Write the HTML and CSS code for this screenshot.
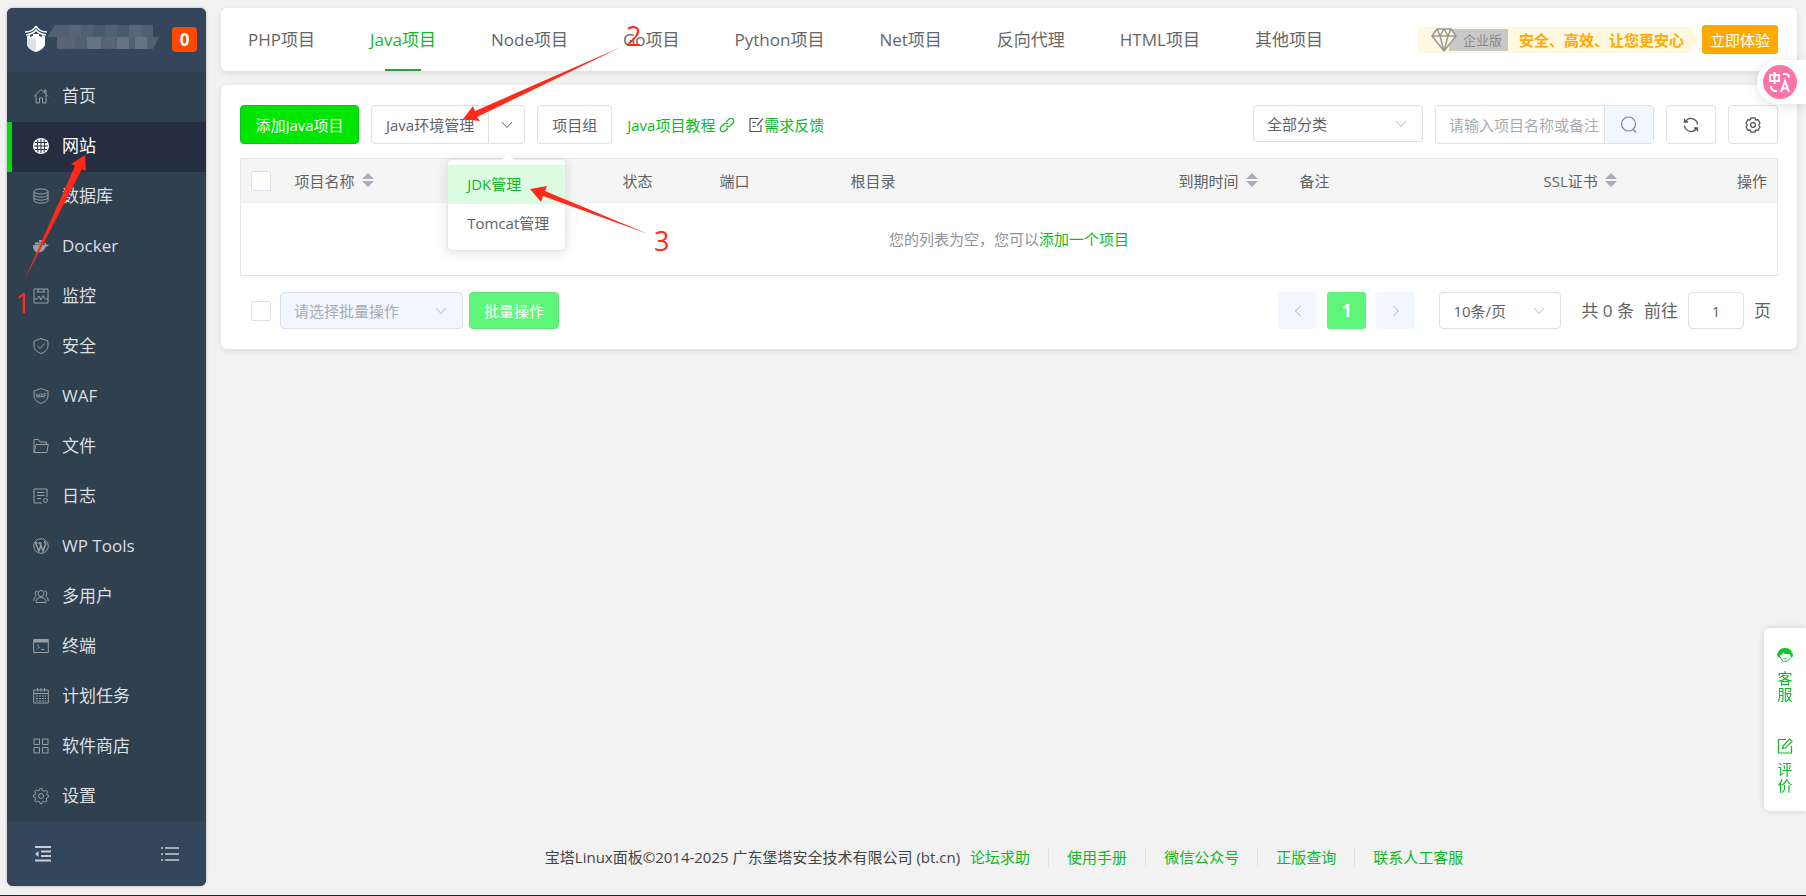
FILE: index.html
```html
<!DOCTYPE html>
<html lang="zh-CN">
<head>
  <meta charset="UTF-8">
  <meta name="viewport" content="width=device-width, initial-scale=1.0">
  <title>宝塔Linux面板</title>
  <link rel="stylesheet" href="styles.css">
</head>
<body>
  <aside class="sidebar">
    <div class="sidebar-head">
      <svg class="logo" viewBox="0 0 22 26" width="22" height="26">
        <path d="M0 6Q8 6 11 0Q14 6 22 6M1 9Q8 8 11 4Q14 8 21 9" fill="none" stroke="#fff" stroke-width="1.500"/>
        <path d="M2 10L5 9V11L8 10V8H14V10L17 11V9L20 10V19Q18 24 11 26Q4 24 2 19Z" fill="#fff"/>
        <path d="M11 12V26Q4 24 2 19V12Z" fill="#dfe3e8"/>
      </svg>
      <svg class="host" viewBox="0 0 112 24" width="112" height="24">
        <path d="M0 12L8 0H106V12H112L106 24H10V12Z" fill="#526074"/>
        <path d="M22 0h12v12h-12zM82 0h12v12h-12zM10 12h18v12h-18zM56 12h12v12h-12z" fill="#59647a"/>
        <path d="M40 12h14v12h-14zM70 12h12v12h-12zM88 12h12v12h-12z" fill="#667385"/>
        <path d="M46 0h12v12h-12zM70 0h12v12h-12z" fill="#475a6f"/>
      </svg>
      <a class="msg-count" href="#">0</a>
    </div>
    <nav class="menu">
      <a href="#"><svg viewBox="0 0 16 16"><path d="M1 8.500L8 1.500L15 8.500M3 7V15H6.500V10H9.500V15H13V7M11.500 4.500V2H13V6"/></svg>首页</a>
      <a href="#" class="active"><svg viewBox="0 0 16 16"><circle cx="8" cy="8" r="8" fill="#fff" stroke="none"/><path class="globe" d="M8 1V15M1 8H15M2 4.500H14M2 11.500H14M5 1.500Q3.500 8 5 14.500M11 1.500Q12.500 8 11 14.500"/></svg>网站</a>
      <a href="#"><svg viewBox="0 0 16 16"><ellipse cx="8" cy="3.500" rx="7" ry="2.500"/><path d="M1 3.500V12.500C1 16 15 16 15 12.500V3.500M1 6.500C1 10 15 10 15 6.500M1 9.500C1 13 15 13 15 9.500"/></svg>数据库</a>
      <a href="#"><svg viewBox="0 0 16 16"><path class="solid" d="M0 7H11.500Q11 5.500 12 4.500Q13.300 5.500 13.300 6.600Q15 6.200 16 7Q15 8.800 12.800 8.800Q11 14.500 5.500 14.500Q0 14.500 0 7ZM2 4.500H10V6.500H2ZM6 2H10V4H6Z"/></svg>Docker</a>
      <a href="#"><svg viewBox="0 0 16 16"><path d="M1 1H15V15H1ZM4 4H12M1 11H4L6 8L8 12L10 7.500L12 11H15M5 1V4M11 1V4"/></svg>监控</a>
      <a href="#"><svg viewBox="0 0 16 16"><path d="M8 .5L15 3V8Q15 13 8 15.500Q1 13 1 8V3ZM4.500 8L7.200 10.500L11.500 5.500"/></svg>安全</a>
      <a href="#"><svg viewBox="0 0 16 16"><path d="M8 .5L15 3V8Q15 13 8 15.500Q1 13 1 8V3Z"/><path class="thin" d="M3 5.500L4 9.500L5 6.500L6 9.500L7 5.500M7.500 9.500L8.700 5.500L10 9.500M8 8.500H9.500M11 9.500V5.500H13.300M11 7.500H13"/></svg>WAF</a>
      <a href="#"><svg viewBox="0 0 16 16"><path d="M1 14.500V1.500H5.500L7 4H13.500V6.500M1 14.500L3 6.500H15.300L13.800 14.500Z"/></svg>文件</a>
      <a href="#"><svg viewBox="0 0 16 16"><path d="M9 15H1V1H14V9M4 4.500H11.500M4 7.500H11.500M4 10.500H8"/><circle cx="12.500" cy="12.500" r="2"/></svg>日志</a>
      <a href="#"><svg viewBox="0 0 16 16"><circle cx="8" cy="8" r="7.300"/><path class="bold" d="M2.500 5L5.800 13L8.300 6.500M6.500 4.500L10 13L12.800 6Q12 4 11 3.500M1.800 5H4.500M5.500 5H8.500"/></svg>WP Tools</a>
      <a href="#"><svg viewBox="0 0 16 16"><circle cx="8" cy="5.500" r="3"/><path d="M3 14.500Q3 9.500 8 9.500T13 14.500ZM4.500 3Q2 3 2.200 5.500Q2.400 7.500 3.500 8Q.5 9.500 .7 13M11.500 3Q14 3 13.800 5.500Q13.600 7.500 12.500 8Q15.500 9.500 15.300 13"/></svg>多用户</a>
      <a href="#"><svg viewBox="0 0 16 16"><path d="M.7 1.500H15.300V14.500H.7ZM4 7L6.500 9L4 11.500M8 11.500H11.500"/><path class="solid" d="M1 1.500H15V4.500H1Z"/></svg>终端</a>
      <a href="#"><svg viewBox="0 0 16 16"><path d="M.7 2H15.300V15H.7ZM.7 5.500H15.300M4.500 0V3.500M8 0V3.500M11.500 0V3.500"/><path d="M3 8H13M3 10.500H13M3 13H13" stroke-dasharray="2 1"/></svg>计划任务</a>
      <a href="#"><svg viewBox="0 0 16 16"><path d="M1 1H6.500V6.500H1ZM9.500 1H15V6.500H9.500ZM1 9.500H6.500V15H1ZM9.500 9.500H15V15H9.500Z"/></svg>软件商店</a>
      <a href="#"><svg viewBox="0 0 16 16"><path d="M6.800 .7H9.200L9.700 2.700L11.300 3.300L13.100 2.300L14.700 4L13.600 5.700L14.200 7.200L15.500 7.500V9L14 9.600L13.300 11L14 13L12.500 14.200L10.800 13.300L9.500 13.800L9 15.400H7L6.500 13.800L5 13.200L3.200 14.200L1.800 12.600L2.700 10.900L2.100 9.500L.5 9V7L2.200 6.500L2.800 5L1.900 3.300L3.500 1.900L5 2.800L6.300 2.400Z"/><circle cx="8" cy="8" r="2.500"/></svg>设置</a>
    </nav>
    <div class="sidebar-foot">
      <button type="button" aria-label="收起菜单"><svg viewBox="0 0 18 18" width="18" height="18"><path d="M1 2H17M7 6.500H17M7 11H17M1 15.500H17" stroke="#c8ced6" stroke-width="1.800"/><path d="M1 9L4.500 6V12Z" fill="#c8ced6"/></svg></button>
      <button type="button" aria-label="菜单设置"><svg viewBox="0 0 18 18" width="18" height="18"><path d="M4 3H18M4 9H18M4 15H18M0 3H2M0 9H2M0 15H2" stroke="#c8ced6" stroke-width="1.600"/></svg></button>
    </div>
  </aside>

  <main class="main">
    <header class="card topbar">
      <nav class="tabs">
        <a href="#">PHP项目</a>
        <a href="#" class="active">Java项目</a>
        <a href="#">Node项目</a>
        <a href="#">Go项目</a>
        <a href="#">Python项目</a>
        <a href="#">Net项目</a>
        <a href="#">反向代理</a>
        <a href="#">HTML项目</a>
        <a href="#">其他项目</a>
      </nav>
      <div class="promo">
        <div class="promo-bar">
          <svg class="diamond" viewBox="0 0 26 24" width="26" height="24"><path d="M6 1H20L25 8L13 23L1 8ZM1 8H25M6 1L9 8L13 23L17 8L20 1M9 8L13 1L17 8" fill="#fff8e0" stroke="#999" stroke-width="1.500" stroke-linejoin="round"/></svg>
          <span class="edition">企业版</span>
          <strong>安全、高效、让您更安心</strong>
        </div>
        <button type="button" class="try">立即体验</button>
      </div>
    </header>

    <section class="card content">
      <div class="toolbar">
        <button type="button" class="btn primary">添加Java项目</button>
        <div class="split">
          <button type="button" class="btn">Java环境管理</button>
          <button type="button" class="btn caret" aria-label="展开"><svg viewBox="0 0 12 8" width="12" height="8"><path d="M1 1L6 6.500L11 1" fill="none" stroke="#606266"/></svg></button>
          <div class="dropdown">
            <a href="#" class="active">JDK管理</a>
            <a href="#">Tomcat管理</a>
          </div>
        </div>
        <button type="button" class="btn">项目组</button>
        <div class="links">
          <a href="#">Java项目教程 <svg viewBox="0 0 16 16" width="16" height="16"><path d="M7 5L10 2Q12 .5 14 2Q15.500 4 14 6L11 9Q9 10.500 7 9M9 11L6 14Q4 15.500 2 14Q.5 12 2 10L5 7Q7 5.500 9 7" fill="none" stroke="#10b824" stroke-width="1.200"/></svg></a>
          <a href="#"><svg viewBox="0 0 16 16" width="16" height="16"><path d="M11 1.500H2V14.500H13V8M4.500 5.500H8M4.500 9.500H7.500M9 8.500L15 1.500" fill="none" stroke="#555" stroke-width="1.200"/></svg>需求反馈</a>
        </div>
        <div class="tools">
          <div class="select category">
            <select aria-label="分类"><option>全部分类</option></select>
            <svg viewBox="0 0 12 8" width="12" height="8"><path d="M1 1L6 6.500L11 1" fill="none" stroke="#b4b8c0"/></svg>
          </div>
          <div class="search">
            <input type="text" aria-label="搜索" placeholder="请输入项目名称或备注">
            <button type="button" aria-label="搜索"><svg viewBox="0 0 18 18" width="18" height="18"><circle cx="8.500" cy="8" r="7" fill="none" stroke="#7d828b" stroke-width="1.200"/><path d="M13 13.500L16 16.500" stroke="#7d828b" stroke-width="1.200"/></svg></button>
          </div>
          <button type="button" class="btn icon" aria-label="刷新"><svg viewBox="0 0 16 16" width="16" height="16"><path d="M1.500 1.500V5H5M2 5Q5 .8 9 1.600Q14 2.700 14.500 7.500M14.500 14.500V11H11M14 11Q11 15.200 7 14.400Q2 13.300 1.500 8.500" fill="none" stroke="#555" stroke-width="1.300"/></svg></button>
          <button type="button" class="btn icon" aria-label="设置"><svg viewBox="0 0 16 16" width="16" height="16"><path d="M6 .8H10L10.700 3L13 2.700L15 6L13.600 8L15 10L13 13.300L10.700 13L10 15.200H6L5.300 13L3 13.300L1 10L2.400 8L1 6L3 2.700L5.300 3Z" fill="none" stroke="#555" stroke-width="1.300" stroke-linejoin="round"/><circle cx="8" cy="8" r="2.400" fill="none" stroke="#555" stroke-width="1.300"/></svg></button>
        </div>
      </div>

      <table class="list">
        <colgroup>
          <col class="c-check"><col class="c-name"><col class="c-state"><col class="c-port"><col><col class="c-date"><col class="c-note"><col class="c-ssl"><col class="c-action">
        </colgroup>
        <thead>
          <tr>
            <th><input type="checkbox" aria-label="全选"></th>
            <th>项目名称<svg class="sort" viewBox="0 0 12 14"><path d="M6 0L12 6H0ZM0 8H12L6 14Z"/></svg></th>
            <th>状态</th>
            <th>端口</th>
            <th>根目录</th>
            <th>到期时间<svg class="sort" viewBox="0 0 12 14"><path d="M6 0L12 6H0ZM0 8H12L6 14Z"/></svg></th>
            <th>备注</th>
            <th>SSL证书<svg class="sort" viewBox="0 0 12 14"><path d="M6 0L12 6H0ZM0 8H12L6 14Z"/></svg></th>
            <th class="right">操作</th>
          </tr>
        </thead>
        <tbody>
          <tr><td colspan="9">您的列表为空，您可以<a href="#">添加一个项目</a></td></tr>
        </tbody>
      </table>

      <div class="table-foot">
        <input type="checkbox" aria-label="选择全部">
        <div class="select batch">
          <select aria-label="批量操作" disabled><option>请选择批量操作</option></select>
          <svg viewBox="0 0 12 8" width="12" height="8"><path d="M1 1L6 6.500L11 1" fill="none" stroke="#b4b8c0"/></svg>
        </div>
        <button type="button" class="btn run" disabled>批量操作</button>
        <div class="pager">
          <button type="button" aria-label="上一页"><svg viewBox="0 0 8 12" width="8" height="12"><path d="M6.500 1L1.500 6L6.500 11" fill="none" stroke="#a8abb2"/></svg></button>
          <button type="button" class="current">1</button>
          <button type="button" aria-label="下一页"><svg viewBox="0 0 8 12" width="8" height="12"><path d="M1.500 1L6.500 6L1.500 11" fill="none" stroke="#a8abb2"/></svg></button>
          <div class="select size">
            <select aria-label="每页条数"><option>10条/页</option></select>
            <svg viewBox="0 0 12 8" width="12" height="8"><path d="M1 1L6 6.500L11 1" fill="none" stroke="#b4b8c0"/></svg>
          </div>
          <span class="total">共 0 条</span>
          <label for="page">前往</label>
          <input type="text" id="page" value="1">
          <span>页</span>
        </div>
      </div>
    </section>

    <footer class="footer">
      <span>宝塔Linux面板©2014-2025 广东堡塔安全技术有限公司 (bt.cn)</span>
      <a href="#">论坛求助</a>
      <a href="#">使用手册</a>
      <a href="#">微信公众号</a>
      <a href="#">正版查询</a>
      <a href="#">联系人工客服</a>
    </footer>
  </main>

  <button type="button" class="translate" aria-label="翻译">
    <svg viewBox="0 0 34 34" width="34" height="34">
      <circle cx="17" cy="17" r="17" fill="#ff74a6"/>
      <path d="M7 10H16V16H7ZM11.500 7V19M20 9H22Q26 9 26 13M8 21Q8 26 13 26H14M18 27L22 16L26 27M19.500 23.500H24.500" fill="none" stroke="#fff" stroke-width="2"/>
    </svg>
  </button>

  <div class="side-help">
    <a href="#">
      <svg viewBox="0 0 16 16" width="16" height="16"><path d="M1 6Q2 1 8 1T15 6Q16 6 16 8T14.500 11L12.500 7Q8 8 6 5.500Q5.500 7.500 3.500 8L2.500 11Q0 10 0 8T1 6Z" fill="#14c52c"/><path d="M3.500 10Q4.500 14.500 8 14.500Q11.500 14.500 13.500 11M6.500 11.500Q8 12.500 9.500 11.500" fill="none" stroke="#14c52c"/></svg>
      <span>客服</span>
    </a>
    <a href="#">
      <svg viewBox="0 0 16 16" width="16" height="16"><path d="M9 1.500H1.500V15H14.500V8M5.500 10.500L6.500 7.500L12.500 1L15 3.200L8.700 9.800Z" fill="none" stroke="#10b824" stroke-width="1.200"/></svg>
      <span>评价</span>
    </a>
  </div>

  <!-- step arrows over the page -->
  <svg class="steps" width="700" height="330" viewBox="0 0 700 330">
    <path d="M85 155L86 171L82 169L24 281L75 166L71 164Z"/>
    <path d="M463 119L473 106L475 111L621 47L477 117L480 121Z"/>
    <path d="M530 189L547 186L545 191L648 234L543 196L541 202Z"/>
    <text x="15" y="313">1</text>
    <text x="626" y="46">2</text>
    <text x="654" y="251">3</text>
  </svg>
</body>
</html>
```
FILE: styles.css
```css
* {
  box-sizing: border-box;
}
body {
  margin: 0;
  min-height: 100vh;
  display: flex;
  gap: 15px;
  padding: 8px 9px 9px 7px;
  background: #f2f2f2;
  border-bottom: 1px solid #222;
  font-family: "Open Sans", "Noto Sans CJK SC", sans-serif;
  font-size: 15px;
  line-height: 20px;
  color: #606266;
}
a {
  color: #10b824;
  text-decoration: none;
}
button, input, select {
  font: inherit;
  color: inherit;
  margin: 0;
}
button {
  cursor: pointer;
}

/* sidebar */
.sidebar {
  width: 199px;
  flex: none;
  display: flex;
  flex-direction: column;
  background: #2f404e;
  border-radius: 6px;
  overflow: hidden;
  box-shadow: 0 0 3px rgba(0, 0, 0, 0.3);
}
.sidebar-head {
  height: 64px;
  display: flex;
  align-items: center;
  padding: 0 9px 2px 18px;
  background: #34465c;
}
.host {
  margin: -4px auto 0 0;
}
.msg-count {
  width: 25px;
  height: 25px;
  border-radius: 4px;
  background: #ff4800;
  color: #fff;
  font-size: 17px;
  font-weight: bold;
  line-height: 25px;
  text-align: center;
}
.menu {
  flex: 1;
}
.menu a {
  height: 50px;
  display: flex;
  align-items: center;
  gap: 13px;
  padding: 0 0 2px 21px;
  border-left: 5px solid transparent;
  color: #dcdfe2;
  font-size: 17px;
}
.menu a.active {
  background: #262d41;
  border-left-color: #00dc0a;
  color: #fff;
}
.menu svg {
  width: 16px;
  height: 16px;
  fill: none;
  stroke: #999fa5;
}
.menu .solid {
  fill: #999fa5;
  stroke: none;
}
.menu .globe {
  stroke: #262d41;
}
.menu .thin {
  stroke-width: 0.8;
}
.menu .bold {
  stroke-width: 1.5;
}
.sidebar-foot {
  height: 64px;
  display: flex;
  align-items: center;
  justify-content: space-between;
  padding: 0 27px;
  background: #34465c;
}
.sidebar-foot button {
  height: 18px;
  padding: 0;
  border: 0;
  background: none;
}

/* main */
.main {
  flex: 1;
  min-width: 0;
  display: flex;
  flex-direction: column;
}
.card {
  background: #fff;
  border-radius: 6px;
  box-shadow: 0 2px 6px rgba(0, 0, 0, 0.1);
}
.topbar {
  height: 63px;
  display: flex;
  align-items: center;
  justify-content: space-between;
  padding-right: 19px;
}
.tabs {
  display: flex;
  gap: 1px;
  height: 100%;
}
.tabs a {
  display: flex;
  flex-direction: column;
  align-items: center;
  padding: 0 27px;
  color: #666;
  font-size: 17px;
  line-height: 63px;
  white-space: nowrap;
}
.tabs a.active {
  color: #10b824;
}
.tabs a.active::after {
  content: "";
  width: 36px;
  height: 2px;
  margin-top: -2px;
  background: #20a53a;
}
.promo {
  display: flex;
  align-items: center;
  gap: 9px;
}
.promo-bar {
  height: 26px;
  width: 275px;
  display: flex;
  align-items: center;
  padding-left: 13px;
  border-radius: 4px;
  background: #fff8e0;
  white-space: nowrap;
}
.promo-bar strong {
  color: #ffa800;
}
.promo-bar::after {
  content: "";
  flex: none;
  margin-left: auto;
  margin-right: -7px;
  border: 7px solid transparent;
  border-right: 0;
  border-left-color: #fff8e0;
}
.diamond {
  flex: none;
  z-index: 1;
}
.edition {
  height: 22px;
  margin: 0 11px 0 -8px;
  padding: 0 6px 0 14px;
  background: #c8c8c8;
  color: #888;
  font-size: 13px;
  line-height: 22px;
}
.try {
  width: 76px;
  height: 29px;
  padding: 0;
  border: 0;
  border-radius: 3px;
  background: #ffa800;
  color: #fff;
}

/* project list */
.content {
  margin-top: 14px;
  padding: 20px 19px;
}
.toolbar {
  display: flex;
  align-items: center;
  height: 39px;
  gap: 12px;
}
.btn {
  height: 39px;
  padding: 0 14px;
  border: 1px solid #dcdfe6;
  border-radius: 4px;
  background: #fff;
  white-space: nowrap;
}
.btn svg {
  display: block;
  margin: 0 auto;
}
.btn.primary {
  min-width: 119px;
  border-color: #00c814;
  background: #00e600;
  color: #fff;
}
.split {
  position: relative;
  display: flex;
}
.split .btn {
  border-radius: 4px 0 0 4px;
}
.split .caret {
  width: 37px;
  padding: 0;
  margin-left: -1px;
  border-radius: 0 4px 4px 0;
}
.dropdown {
  position: absolute;
  z-index: 5;
  top: 54px;
  right: -41px;
  width: 119px;
  padding: 5px 0;
  height: 92px;
  border: 1px solid #e4e7ed;
  border-radius: 4px;
  background: #fff;
  box-shadow: 0 2px 12px rgba(0, 0, 0, 0.12);
}
.dropdown::before {
  content: "";
  position: absolute;
  top: -6px;
  left: 53px;
  border: 7px solid transparent;
  border-top: 0;
  border-bottom-color: #fff;
}
.dropdown a {
  display: block;
  padding-left: 19px;
  color: #606266;
  line-height: 39px;
}
.dropdown a.active {
  background: #dcfce1;
  color: #10b824;
}
.links {
  display: flex;
  gap: 13px;
  padding-left: 3px;
  white-space: nowrap;
}
.links svg {
  vertical-align: -2px;
}
.tools {
  display: flex;
  gap: 12px;
  margin-left: auto;
}
.select {
  position: relative;
}
.select select {
  width: 100%;
  height: 37px;
  padding: 0 13px;
  border: 1px solid #dcdfe6;
  border-radius: 4px;
  background: #fff;
  appearance: none;
}
.select svg {
  position: absolute;
  top: 15px;
  right: 16px;
  pointer-events: none;
}
.category {
  width: 170px;
}
.search {
  width: 219px;
  height: 39px;
  display: flex;
  border: 1px solid #dcdfe6;
  border-radius: 4px;
  overflow: hidden;
}
.search input {
  flex: 1;
  min-width: 0;
  padding: 0 0 0 13px;
  border: 0;
}
.search input::placeholder {
  color: #a8abb2;
}
.search button {
  width: 49px;
  padding: 0;
  border: 0;
  border-left: 1px solid #dcdfe6;
  background: #f2f6ff;
}
.search svg {
  display: block;
  margin: 0 auto;
}
.btn.icon {
  width: 50px;
  padding: 0;
}

.list {
  width: 100%;
  margin-top: 14px;
  table-layout: fixed;
  border-collapse: collapse;
  border: 1px solid #e4e6ea;
}
.list th {
  height: 44px;
  padding: 0 10px;
  border-bottom: 1px solid #ebeef5;
  background: #f5f5f5;
  font-weight: normal;
  text-align: left;
}
.list th.right {
  text-align: right;
}
.list td {
  height: 73px;
  text-align: center;
  color: #909399;
}
.c-check { width: 44px; }
.c-name { width: 328px; }
.c-state { width: 97px; }
.c-port { width: 131px; }
.c-date { width: 121px; }
.c-note { width: 244px; }
.c-ssl { width: 120px; }
.c-action { width: 124px; }
.sort {
  width: 12px;
  height: 14px;
  margin-left: 7px;
  fill: #a8abb8;
}
input[type="checkbox"] {
  display: block;
  flex: none;
  width: 20px;
  height: 20px;
  border: 1px solid #dcdfe6;
  border-radius: 2px;
  background: #fff;
  appearance: none;
}

.table-foot {
  display: flex;
  align-items: center;
  margin-top: 16px;
  padding-left: 11px;
}
.batch {
  width: 183px;
  margin: 0 6px 0 9px;
}
.batch select {
  background: #f2f6ff;
  color: #a8abb2;
  opacity: 1;
}
.btn.run {
  height: 37px;
  border-color: #5fe878;
  background: #5ff57b;
  color: #fff;
}
.pager {
  display: flex;
  align-items: center;
  margin-left: auto;
  padding-right: 7px;
  gap: 10px;
  font-size: 17px;
  white-space: nowrap;
}
.pager button {
  width: 39px;
  height: 37px;
  padding: 0;
  border: 0;
  border-radius: 3px;
  background: #f2f6ff;
}
.pager .current {
  background: #5ff57b;
  color: #fff;
  font-weight: bold;
}
.pager .size {
  width: 122px;
  margin: 0 10px 0 14px;
  font-size: 15px;
}
.pager input {
  width: 56px;
  height: 37px;
  border: 1px solid #dcdfe6;
  border-radius: 4px;
  font-size: 15px;
  text-align: center;
}

/* footer */
.footer {
  display: flex;
  justify-content: center;
  margin-top: auto;
  padding: 0 10px 19px 0;
  color: #444;
}
.footer a {
  margin-right: 18px;
}
.footer span {
  margin-right: 10px;
}
.footer a + a {
  padding-left: 18px;
  border-left: 1px solid #dfe1ea;
}
.footer a:last-child {
  margin-right: 0;
}

/* floating widgets */
.translate {
  position: fixed;
  top: 60px;
  right: 0;
  width: 49px;
  height: 44px;
  padding: 5px 9px 5px 6px;
  border: 0;
  border-radius: 22px 0 0 22px;
  background: #fff;
  box-shadow: 0 2px 12px rgba(0, 0, 0, 0.12);
}
.translate svg {
  display: block;
}
.side-help {
  position: fixed;
  right: 0;
  bottom: 85px;
  width: 42px;
  height: 183px;
  display: flex;
  flex-direction: column;
  align-items: center;
  gap: 36px;
  padding-top: 19px;
  border-radius: 6px 0 0 6px;
  background: #fff;
  box-shadow: 0 0 6px rgba(0, 0, 0, 0.15);
}
.side-help a {
  width: 16px;
  font-size: 15px;
  line-height: 16px;
  text-align: center;
}
.side-help svg {
  display: block;
  margin-bottom: 7px;
}
.side-help span {
  display: block;
}
.steps {
  position: absolute;
  top: 0;
  left: 0;
  z-index: 10;
  fill: #ff2a1a;
  font-size: 27px;
  pointer-events: none;
}
```
